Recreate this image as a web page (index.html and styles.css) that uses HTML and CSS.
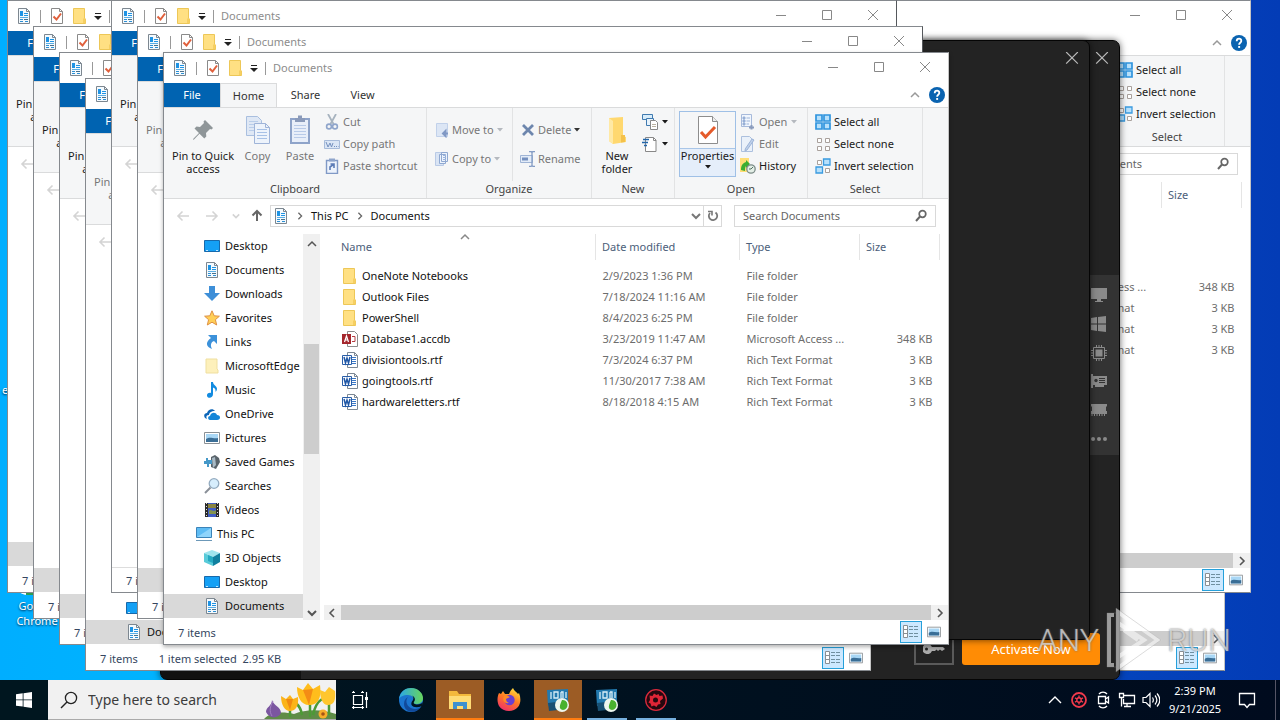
FILE: index.html
```html
<!DOCTYPE html>
<html lang="en">
<head>
<meta charset="utf-8">
<title>Desktop</title>
<link rel="stylesheet" href="styles.css">
</head>
<body>
<svg class="sprite" aria-hidden="true">
  <symbol id="doc" viewBox="0 0 16 16"><path d="M2.500.500h8l3 3v12h-11z" fill="#f4fafe" stroke="#7d8790"/><path d="M10.500.500v3h3" fill="none" stroke="#7d8790"/><path d="M4 3h3v5H4zM8 5h4v1H8zM8 7h4v1H8z" fill="#1e93e4"/><path d="M4 9h8v1H4z" fill="#5aaee4"/><path d="M4 11h3v1H4zM4 13h3v1H4zM9 13h3v1H9z" fill="#2c8fd4"/><path d="M8 11h4v1H8z" fill="#4a6f88"/></symbol>
  <symbol id="check" viewBox="0 0 16 16"><path d="M2.500.500h8l3 3v12h-11z" fill="#fff" stroke="#8a8a8a"/><path d="M10.500.500v3h3" fill="none" stroke="#8a8a8a"/><path d="M4.500 8.500l3 3 4.500-6" fill="none" stroke="#e0603c" stroke-width="2"/></symbol>
  <symbol id="folder" viewBox="0 0 16 16"><path d="M1.500.500h11v10l1 .5v4.500h-12z" fill="#ffe083" stroke="#edc757"/><path d="M11 15V10.500h2.500V15z" fill="#f6cf62"/></symbol>
  <symbol id="tri" viewBox="0 0 8 8"><path d="M1 2h6L4 5.500z" fill="currentColor"/></symbol>
  <symbol id="bartri" viewBox="0 0 8 8"><path d="M1 1h6v1H1zM0 4h8L4 8z" fill="#222"/></symbol>
  <symbol id="min" viewBox="0 0 12 12"><path d="M1 5.500h10" stroke="currentColor"/></symbol>
  <symbol id="max" viewBox="0 0 12 12"><path d="M1.500.500h9v9h-9z" fill="none" stroke="currentColor"/></symbol>
  <symbol id="close" viewBox="0 0 12 12"><path d="M1 0l10 10M11 0L1 10" stroke="currentColor"/></symbol>
  <symbol id="up" viewBox="0 0 10 10"><path d="M1 7l4-4 4 4" fill="none" stroke="currentColor" stroke-width="1.500"/></symbol>
  <symbol id="down" viewBox="0 0 10 10"><path d="M1 3l4 4 4-4" fill="none" stroke="currentColor" stroke-width="2"/></symbol>
  <symbol id="right" viewBox="0 0 10 10"><path d="M3 1l4 4-4 4" fill="none" stroke="currentColor" stroke-width="1.600"/></symbol>
  <symbol id="left" viewBox="0 0 10 10"><path d="M7 1L3 5l4 4" fill="none" stroke="currentColor" stroke-width="1.600"/></symbol>
  <symbol id="help" viewBox="0 0 16 16"><circle cx="8" cy="8" r="8" fill="#0a63b0"/><path d="M5.700 6.200C5.700 2.800 10.500 3 10.300 6c-.1 1.800-2.200 1.800-2.200 3.800" fill="none" stroke="#fff" stroke-width="1.800"/><path d="M7.200 11h1.900v1.900H7.200z" fill="#fff"/></symbol>
  <symbol id="back" viewBox="0 0 14 12"><path d="M13 6H2M6.500 1.500L2 6l4.500 4.500" fill="none" stroke="currentColor" stroke-width="1.600"/></symbol>
  <symbol id="fwd" viewBox="0 0 14 12"><path d="M1 6h11M7.500 1.500L12 6l-4.500 4.500" fill="none" stroke="currentColor" stroke-width="1.600"/></symbol>
  <symbol id="uparrow" viewBox="0 0 12 14"><path d="M6 12V2M1.500 6.500L6 2l4.500 4.500" fill="none" stroke="currentColor" stroke-width="2"/></symbol>
  <symbol id="refresh" viewBox="0 0 12 12"><path d="M8.500 2.500A4.200 4.200 0 1 1 3 3" fill="none" stroke="currentColor" stroke-width="1.800"/><path d="M1 1.500h4v4" fill="none" stroke="currentColor" stroke-width="1.600"/></symbol>
  <symbol id="mag" viewBox="0 0 14 14"><circle cx="8.500" cy="5" r="3.300" fill="none" stroke="currentColor" stroke-width="1.700"/><path d="M6 7.500L2 12" stroke="currentColor" stroke-width="2"/></symbol>
  <symbol id="pin" viewBox="0 0 22 24"><path d="M13 2l8 8-1.500 1.500-1.500-.5-4 4 .3 3.500-2 2-4.800-4.800L2 21.500 1 22l.5-1.500 5.500-5.500-4.500-4.500 2-2L8 9l4-4-.5-1.500z" fill="#8f9699"/></symbol>
  <symbol id="copy" viewBox="0 0 26 30"><path d="M1.500 1.500h11l4 4v15h-15z" fill="#dfe8f5" stroke="#a9bfdf"/><path d="M4 6.500h9M4 9.500h9M4 12.500h9M4 15.500h9" stroke="#b9cde9"/><path d="M9.500 8.500h11l4 4v16h-15z" fill="#edf3fb" stroke="#9fb4d8"/><path d="M20.500 8.500v4h4" fill="none" stroke="#9fb4d8"/><path d="M12 14.500h10M12 17.500h10M12 20.500h10M12 23.500h10" stroke="#a7c1e6"/></symbol>
  <symbol id="paste" viewBox="0 0 22 30"><path d="M2 4h18v24H2z" fill="#e8eef9" stroke="#8ea3c9" stroke-width="2"/><path d="M6 3h3V.500h4V3h3v4H6z" fill="#8a9aba"/><path d="M5 10.500h12M5 13.500h12M5 16.500h12M5 19.500h12M5 22.500h12" stroke="#b8cae8"/></symbol>
  <symbol id="cut" viewBox="0 0 16 16"><path d="M4 0l5.500 10M12 0L6.500 10" stroke="#a7b3bf" stroke-width="1.800"/><circle cx="5" cy="12.500" r="2.400" fill="none" stroke="#8fa5cb" stroke-width="1.600"/><circle cx="11" cy="12.500" r="2.400" fill="none" stroke="#8fa5cb" stroke-width="1.600"/></symbol>
  <symbol id="copypath" viewBox="0 0 16 16"><path d="M.500 4.500h15v8H.500z" fill="#dbe6f5" stroke="#a7bbd9"/><path d="M2 6l2 5 2-4 1.500 4L9 7M10 10.500h1M12 10.500h1M14 10.500h.5" fill="none" stroke="#7591bf"/></symbol>
  <symbol id="pastesc" viewBox="0 0 16 16"><path d="M2.500 2.500h11v13h-11z" fill="#edf3fc" stroke="#8099c6" stroke-width="1.400"/><path d="M5 .500h6v3H5z" fill="#8fa5cb"/><path d="M6 12V9l4-3M6.500 6H10v4" fill="none" stroke="#5c7cb6" stroke-width="1.600"/></symbol>
  <symbol id="moveto" viewBox="0 0 16 16"><path d="M2.500 1.500h11v13h-11z" fill="#dce6f5" stroke="#c1d1ea"/><path d="M14 11.500H9M11.500 9l-2.500 2.500 2.500 2.500z" fill="#8098c4" stroke="#8098c4" stroke-width="2"/></symbol>
  <symbol id="copyto" viewBox="0 0 16 16"><path d="M1.500 1.500h8v13h-8z" fill="#d9e4f4" stroke="#b9cae6"/><path d="M5.500 3.500h6v9h-6zM7.500 1.500h6v9h-6z" fill="#edf3fc" stroke="#8fa8d1"/><path d="M9 4.500h3M9 6.500h3M9 8.500h3" stroke="#9cb5dd"/></symbol>
  <symbol id="delete" viewBox="0 0 16 16"><path d="M3 3l10 10M13 3L3 13" stroke="#6d86ad" stroke-width="2.800"/></symbol>
  <symbol id="rename" viewBox="0 0 16 16"><path d="M.500 4.500h12v7H.500z" fill="#e3ecf8" stroke="#9fb4d5"/><path d="M2 6.500h6v3H2z" fill="#7590bf"/><path d="M9 .500h2l1 1 1-1h2M12 1.500v13M9 15.500h2l1-1 1 1h2" fill="none" stroke="#829bc4" stroke-width="1.300"/></symbol>
  <symbol id="bigfolder" viewBox="0 0 20 30"><path d="M2 3l14-1v19l3 1v5L6 29 2 26z" fill="#ffd86f"/><path d="M2 3l4 3v23l-4-3z" fill="#ffe9a5"/><path d="M14 20h4v7l-4 .5z" fill="#f4c14b"/></symbol>
  <symbol id="newitem" viewBox="0 0 16 16"><path d="M.500.500h10v5H.500z" fill="#d7ecfa" stroke="#407ab0"/><path d="M4.500 4.500h7v7h-7z" fill="#e8f3fc" stroke="#407ab0"/><path d="M8.500 6.500h5l2 2v7h-7z" fill="#fff" stroke="#888"/><path d="M10 10.500h4M10 12.500h4" stroke="#b9b1a1"/></symbol>
  <symbol id="easy" viewBox="0 0 16 16"><path d="M3.500 1.500h8l2.500 2.500v11.500H3.500z" fill="#fff" stroke="#888"/><path d="M1 3.500h6M0 6.500h6M2 9.500h3" stroke="#2467aa" stroke-width="1.300"/><path d="M11.500 1.500v3H14" fill="none" stroke="#888"/></symbol>
  <symbol id="bigcheck" viewBox="0 0 22 30"><path d="M1.500 1.500h14l5 5v22h-19z" fill="#fff" stroke="#8d8d8d"/><path d="M15.500 1.500v5h5" fill="#eee" stroke="#8d8d8d"/><path d="M4 17l4.500 5L18 12" fill="none" stroke="#e55b2b" stroke-width="3"/></symbol>
  <symbol id="open" viewBox="0 0 16 16"><path d="M1.500.500h10v12h-10z" fill="#f1f6fd" stroke="#a7badb"/><path d="M3 3h2v2H3zM3 6h2v2H3zM3 9h2v2H3zM6.500 4H10M6.500 7H10M6.500 10H9" fill="#86a1cc" stroke="#9db4d9"/><path d="M9 13.500h5M11.500 11v4.500" stroke="#8b9cbd" stroke-width="2"/></symbol>
  <symbol id="edit" viewBox="0 0 16 16"><path d="M1.500.500h8l3 3v12h-11z" fill="#eaf1fa" stroke="#acc0de"/><path d="M14 4L7 14l-2 1 .3-2.200L12 3z" fill="#bfd1eb" stroke="#9cb3d7"/></symbol>
  <symbol id="history" viewBox="0 0 16 16"><path d="M0 0h9v14H0z" fill="#ffde76"/><path d="M1 12c0-5 2-7 5-8v-2l4 4-4 4V8c-1 1-1 3-1 5z" fill="#3cae30"/><circle cx="11" cy="11" r="4.200" fill="#e3eee6" stroke="#7c8c88" stroke-width="1.300"/><path d="M13 9l-2 2H9" stroke="#507060" fill="none"/></symbol>
  <symbol id="selall" viewBox="0 0 16 16"><path d="M1 1h6v6H1zM9 1h6v6H9zM1 9h6v6H1zM9 9h6v6H9z" fill="#b7e0fb" stroke="#2f94de" stroke-width="1.700"/></symbol>
  <symbol id="selnone" viewBox="0 0 16 16"><path d="M2.500 2.500h4v4h-4zM10.500 2.500h4v4h-4zM2.500 10.500h4v4h-4zM10.500 10.500h4v4h-4z" fill="#fff" stroke="#a9a19c"/></symbol>
  <symbol id="selinv" viewBox="0 0 16 16"><path d="M2.500 2.500h4v4h-4zM10.500 10.500h4v4h-4z" fill="#fff" stroke="#a9a19c"/><path d="M8.500 1h6.500v6H8.500zM1 9h6.500v6H1z" fill="#b7e0fb" stroke="#3a9be0" stroke-width="1.300"/></symbol>
  <symbol id="desk" viewBox="0 0 16 16"><path d="M.500 2.500h15v11H.500z" fill="#14a0f5" stroke="#1769ab"/><path d="M2 12.500h2M12 12.500h2" stroke="#bfe6ff"/></symbol>
  <symbol id="downl" viewBox="0 0 16 16"><path d="M5 0h6v7h5l-8 8-8-8h5z" fill="#3e8fd8"/></symbol>
  <symbol id="star" viewBox="0 0 16 16"><path d="M8 .800l2.200 5 5.200.4-4 3.500 1.300 5.300L8 12.200 3.300 15l1.300-5.300-4-3.500 5.200-.4z" fill="#ffcf57" stroke="#df9144"/></symbol>
  <symbol id="link" viewBox="0 0 16 16"><path d="M4 1h9v9l-3-3c-3 1-4 4-2 8-6-2-7-7-1-11z" fill="#3c91da"/></symbol>
  <symbol id="folder2" viewBox="0 0 16 16"><path d="M2 1h11v10l1 1v3H2z" fill="#fdf0bb" stroke="#efdf9f"/></symbol>
  <symbol id="music" viewBox="0 0 16 16"><path d="M7 0h2c0 3 4 4 4 7 0 1-.5 2-1.500 3 .5-3-1-4-2.500-4.500V12c0 5-6.500 4.500-6 1 .3-2 2.500-2.500 4-2z" fill="#128be0"/></symbol>
  <symbol id="onedrive" viewBox="0 0 16 16"><path d="M1 12c-2-3 0-5 2-5 1-4 6-5 8-2-4 0-6 2-6 4-3 0-3 2-2 4z" fill="#0d66b8"/><path d="M6 14c-3-1-2-4 0-4 1-4 6-4 7-1 4 0 4 5 0 5z" fill="#1586d8"/></symbol>
  <symbol id="pics" viewBox="0 0 16 16"><path d="M.500 2.500h15v11H.500z" fill="#fff" stroke="#8a9095"/><path d="M2 4h12v8H2z" fill="#a9d7f5"/><path d="M2 9c4-3 7 0 12-1v4H2z" fill="#3a6e96"/></symbol>
  <symbol id="games" viewBox="0 0 16 16"><path d="M7 3l4-2 4 3 1 4-4 7-5-2z" fill="#59636a"/><path d="M8 4l3-1 1 8-3 3z" fill="#a9bac5"/><path d="M0 7h2V4h2v2h4v4H5v3H3v-3H0z" fill="#4598c8"/></symbol>
  <symbol id="search2" viewBox="0 0 16 16"><circle cx="10" cy="5.500" r="4.800" fill="#d7eefd" stroke="#93abc0" stroke-width="1.300"/><path d="M6.500 9.500L1 15" stroke="#8a8f98" stroke-width="2"/></symbol>
  <symbol id="videos" viewBox="0 0 16 16"><path d="M1 1h14v14H1z" fill="#2b2b2b"/><path d="M4 1h8v14H4z" fill="#415dc4"/><path d="M4 2h8v4H4z" fill="#8a8440"/><path d="M5 9c2-3 4 2 7-1v4H5z" fill="#83934f"/><path d="M2.500 1v14M13.500 1v14" stroke="#ddd" stroke-dasharray="1 2"/></symbol>
  <symbol id="pc" viewBox="0 0 16 16"><path d="M.500 1.500h15v10H.500z" fill="#5ebcf4" stroke="#3b83b8"/><path d="M1 11L15 2v9z" fill="#8fd4fb"/><path d="M0 14.500h16" stroke="#6c98b8"/></symbol>
  <symbol id="objects" viewBox="0 0 16 16"><path d="M0 3l8-3 8 3-7 4z" fill="#9fe5ee"/><path d="M0 3l9 4v9l-9-4z" fill="#59cbd9"/><path d="M16 3L9 7v9l7-4z" fill="#10809f"/><path d="M4 5l5 2v6l-5-2z" fill="#25a9c1"/></symbol>
  <symbol id="access" viewBox="0 0 16 16"><path d="M5.500.500h7l3 3v12h-10z" fill="#fff" stroke="#8c8c8c"/><path d="M0 3h9v10H0z" fill="#a4262c"/><path d="M2.500 11l2-6 2 6M3.200 9h2.600" fill="none" stroke="#fff" stroke-width="1.200"/><path d="M10 5.500h3v5h-3" fill="none" stroke="#b53c42"/></symbol>
  <symbol id="word" viewBox="0 0 16 16"><path d="M5.500.500h7l3 3v12h-10z" fill="#fff" stroke="#7c8894"/><path d="M12.500.500v3h3" fill="none" stroke="#7c8894"/><path d="M10 5.500h4M10 7.500h4M10 9.500h4M10 11.500h4" stroke="#3b78c6"/><path d="M.500 3.500h9v9h-9z" fill="#fff" stroke="#2a5ea8"/><path d="M2 5l1.500 6L5 6l1.500 5L8 5" fill="none" stroke="#2158a6" stroke-width="1.500"/></symbol>
  <symbol id="details" viewBox="0 0 16 14"><path d="M.500.500h4v12h-4zM.500 4.500h4M.500 8.500h4" fill="#fff" stroke="#8a8f94"/><path d="M6 1.500h4M11 1.500h4M6 4.500h4M11 4.500h4M6 8.500h4M11 8.500h4M6 11.500h4M11 11.500h4" stroke="#6f8fa0"/></symbol>
</svg>

<main class="desktop">
  <div class="shortcut shortcut-edge">e</div>
  <div class="shortcut shortcut-chrome"><i class="chrome-dot"></i>Google<br>Chrome</div>

  <section class="window at-1">
    <header class="titlebar"><svg class="i16"><use href="#doc"/></svg><i class="bar"></i><svg class="i16"><use href="#check"/></svg><svg class="i16 fold"><use href="#folder"/></svg><svg class="i8"><use href="#bartri"/></svg><i class="bar"></i></header>
    <nav class="tabs"><button class="tab file">File</button></nav>
    <div class="ribbon"><div class="group"><div class="tools"><button class="big pinbtn"><span class="bigicon"></span><span>Pin to Quick<br>access</span></button></div></div></div>
    <div class="address"><svg class="arrow faint"><use href="#back"/></svg></div>
    <div class="body"><div class="tree"><div class="node selected"></div></div></div>
    <footer class="status"><span>7 items</span></footer>
  </section>

  <section class="window at-2">
    <header class="titlebar"><svg class="i16"><use href="#doc"/></svg><i class="bar"></i><svg class="i16"><use href="#check"/></svg><svg class="i16 fold"><use href="#folder"/></svg></header>
    <nav class="tabs"><button class="tab file">File</button></nav>
    <div class="ribbon"><div class="group"><div class="tools"><button class="big pinbtn"><span class="bigicon"></span><span>Pin to Quick<br>access</span></button></div></div></div>
    <div class="address"><svg class="arrow faint"><use href="#back"/></svg></div>
    <div class="body"><div class="tree"><div class="node selected"></div></div></div>
    <footer class="status"><span>7 items</span></footer>
  </section>

  <section class="window at-3">
    <header class="titlebar"><svg class="i16"><use href="#doc"/></svg><i class="bar"></i><svg class="i16"><use href="#check"/></svg></header>
    <nav class="tabs"><button class="tab file">File</button></nav>
    <div class="ribbon"><div class="group"><div class="tools"><button class="big pinbtn"><span class="bigicon"></span><span>Pin to Quick<br>access</span></button></div></div></div>
    <div class="address"><svg class="arrow faint"><use href="#back"/></svg></div>
    <div class="body"><div class="tree"><div class="node selected"></div></div></div>
    <footer class="status"><span>7 items</span></footer>
  </section>

  <section class="window at-b">
    <div class="body"><div class="files"><div class="hscroll"><span class="track"></span><svg class="i10"><use href="#right"/></svg></div></div></div>
    <footer class="status"><div class="views"><button class="view on" aria-label="Details"><svg><use href="#details"/></svg></button><button class="view" aria-label="Thumbnails"><svg><use href="#pics"/></svg></button></div></footer>
  </section>

  <section class="window at-a">
    <header class="titlebar"><div class="controls"><button aria-label="Minimize"><svg class="i12"><use href="#min"/></svg></button><button aria-label="Maximize"><svg class="i12"><use href="#max"/></svg></button><button aria-label="Close"><svg class="i12"><use href="#close"/></svg></button></div></header>
    <nav class="tabs"><div class="tabend"><svg class="i10"><use href="#up"/></svg><svg class="i16"><use href="#help"/></svg></div></nav>
    <div class="ribbon end">
      <div class="group select"><div class="tools"><div class="stack">
        <button class="small"><svg class="i16"><use href="#selall"/></svg><span>Select all</span></button>
        <button class="small"><svg class="i16"><use href="#selnone"/></svg><span>Select none</span></button>
        <button class="small"><svg class="i16"><use href="#selinv"/></svg><span>Invert selection</span></button></div></div><div class="caption">Select</div></div>
    </div>
    <div class="address end"><label class="search"><input type="text" placeholder="Search Documents" aria-label="Search"><svg class="i14"><use href="#mag"/></svg></label></div>
    <div class="body"><div class="files">
      <table class="list right">
        <colgroup><col class="c-type"><col class="c-size"></colgroup>
        <thead><tr><th></th><th>Size</th></tr></thead>
        <tbody>
          <tr class="blank"><td></td><td></td></tr><tr class="blank"><td></td><td></td></tr><tr class="blank"><td></td><td></td></tr>
          <tr><td>Microsoft Access ...</td><td>348 KB</td></tr>
          <tr><td>Rich Text Format</td><td>3 KB</td></tr>
          <tr><td>Rich Text Format</td><td>3 KB</td></tr>
          <tr><td>Rich Text Format</td><td>3 KB</td></tr>
        </tbody>
      </table>
      <div class="hscroll"><span class="track"></span><svg class="i10"><use href="#right"/></svg></div></div></div>
    <footer class="status"><div class="views"><button class="view on" aria-label="Details"><svg><use href="#details"/></svg></button><button class="view" aria-label="Thumbnails"><svg><use href="#pics"/></svg></button></div></footer>
  </section>

  <section class="dark dark-back">
    <button class="dclose" aria-label="Close"><svg class="i14"><use href="#close"/></svg></button>
    <div class="specs">
      <svg viewBox="0 0 16 16"><path d="M0 1h16v11H10v2h2v1H4v-1h2v-2H0z"/></svg>
      <svg viewBox="0 0 16 16"><path d="M0 2l6-1v6.500H0zM7 1l8-1v7.500H7zM0 8.500h6V15l-6-1zM7 8.500h8V16l-8-1z"/></svg>
      <svg viewBox="0 0 16 16"><path d="M4.500 4.500h7v7h-7z"/><path d="M2.500 2.500h11v11h-11z" fill="none" stroke="#8a8a8a"/><path d="M5.500 0v2M8 0v2M10.500 0v2M5.500 14v2M8 14v2M10.500 14v2M0 5.500h2M0 8h2M0 10.500h2M14 5.500h2M14 8h2M14 10.500h2" stroke="#8a8a8a"/></svg>
      <svg viewBox="0 0 16 16"><path d="M0 1h2v2h14v9h-3v2H4v-2H2v3H0z"/><path d="M8 5.500h6M8 7.500h6M8 9.500h6" stroke="#333"/><circle cx="5" cy="7.500" r="1.700" fill="#333"/></svg>
      <svg viewBox="0 0 16 16"><path d="M0 2h16v2l-1 1v4h1v3H0V9h1V5L0 4z"/><path d="M1 12v2M3.500 12v2M6 12v2M8.500 12v2M11 12v2M13.500 12v2" stroke="#8a8a8a"/></svg>
      <svg viewBox="0 0 16 16"><circle cx="2" cy="8" r="2"/><circle cx="8" cy="8" r="2"/><circle cx="14" cy="8" r="2"/></svg>
    </div>
    <div class="dfoot">
      <button class="key" aria-label="Enter key"><svg viewBox="0 0 22 10"><path d="M5 0a5 5 0 1 0 4 7h3l1.500-1.500L15 7l2-1.500L19 7l3-2-2-2H9A5 5 0 0 0 5 0zM3.500 3.500a1.500 1.500 0 1 1 0 3 1.500 1.500 0 0 1 0-3z" fill="#aaa" fill-rule="evenodd"/></svg></button>
      <button class="activate">Activate Now</button>
    </div>
  </section>
  <section class="dark dark-front"><button class="dclose" aria-label="Close"><svg class="i14"><use href="#close"/></svg></button></section>

  <section class="window inactive at-4">
    <header class="titlebar"><svg class="i16"><use href="#doc"/></svg></header>
    <nav class="tabs"><button class="tab file">File</button></nav>
    <div class="ribbon"><div class="group"><div class="tools"><button class="big pinbtn"><span class="bigicon"></span><span>Pin to Quick<br>access</span></button></div></div></div>
    <div class="address"><svg class="arrow faint"><use href="#back"/></svg></div>
    <div class="body"><div class="tree"><div class="node"><svg class="i16"><use href="#desk"/></svg></div><div class="node selected"><svg class="i16"><use href="#doc"/></svg><span>Documents</span></div></div></div>
    <footer class="status"><span>7 items</span><span>1 item selected&nbsp; 2.95 KB</span><div class="views"><button class="view on" aria-label="Details"><svg><use href="#details"/></svg></button><button class="view" aria-label="Thumbnails"><svg><use href="#pics"/></svg></button></div></footer>
  </section>

  <section class="window at-5">
    <header class="titlebar"><svg class="i16"><use href="#doc"/></svg><i class="bar"></i><svg class="i16"><use href="#check"/></svg><svg class="i16 fold"><use href="#folder"/></svg><svg class="i8"><use href="#bartri"/></svg><i class="bar"></i><span class="title">Documents</span><div class="controls"><button aria-label="Minimize"><svg class="i12"><use href="#min"/></svg></button><button aria-label="Maximize"><svg class="i12"><use href="#max"/></svg></button><button aria-label="Close"><svg class="i12"><use href="#close"/></svg></button></div></header>
    <nav class="tabs"><button class="tab file">File</button></nav>
    <div class="ribbon"><div class="group"><div class="tools"><button class="big pinbtn"><span class="bigicon"></span><span>Pin to Quick<br>access</span></button></div></div></div>
    <div class="address"><svg class="arrow faint"><use href="#back"/></svg></div>
    <div class="body ruled"></div>
    <footer class="status"><span>7 items</span></footer>
  </section>

  <section class="window inactive at-6">
    <header class="titlebar"><svg class="i16"><use href="#doc"/></svg><i class="bar"></i><svg class="i16"><use href="#check"/></svg><svg class="i16 fold"><use href="#folder"/></svg><svg class="i8"><use href="#bartri"/></svg><i class="bar"></i><span class="title">Documents</span><div class="controls"><button aria-label="Minimize"><svg class="i12"><use href="#min"/></svg></button><button aria-label="Maximize"><svg class="i12"><use href="#max"/></svg></button><button aria-label="Close"><svg class="i12"><use href="#close"/></svg></button></div></header>
    <nav class="tabs"><button class="tab file">File</button></nav>
    <div class="ribbon"><div class="group"><div class="tools"><button class="big pinbtn"><span class="bigicon"></span><span>Pin to Quick<br>access</span></button></div></div></div>
    <div class="address"><svg class="arrow faint"><use href="#back"/></svg></div>
    <div class="body"><div class="tree"><div class="node selected"></div></div></div>
    <footer class="status"><span>7 items</span></footer>
  </section>

  <section class="window at-7">
    <header class="titlebar"><svg class="i16"><use href="#doc"/></svg><i class="bar"></i><svg class="i16"><use href="#check"/></svg><svg class="i16 fold"><use href="#folder"/></svg><svg class="i8"><use href="#bartri"/></svg><i class="bar"></i><span class="title">Documents</span><div class="controls"><button aria-label="Minimize"><svg class="i12"><use href="#min"/></svg></button><button aria-label="Maximize"><svg class="i12"><use href="#max"/></svg></button><button aria-label="Close"><svg class="i12"><use href="#close"/></svg></button></div></header>
    <nav class="tabs"><button class="tab file">File</button><button class="tab home">Home</button><button class="tab">Share</button><button class="tab">View</button><div class="tabend"><svg class="i10"><use href="#up"/></svg><svg class="i16"><use href="#help"/></svg></div></nav>
    <div class="ribbon">
      <div class="group clipboard"><div class="tools">
        <button class="big pinbtn"><span class="bigicon"><svg width="22" height="24"><use href="#pin"/></svg></span><span>Pin to Quick<br>access</span></button>
        <button class="big copybtn off"><span class="bigicon"><svg width="26" height="30"><use href="#copy"/></svg></span>Copy</button>
        <button class="big pastebtn off"><span class="bigicon"><svg width="22" height="30"><use href="#paste"/></svg></span>Paste</button>
        <div class="stack">
          <button class="small off"><svg class="i16"><use href="#cut"/></svg><span>Cut</span></button>
          <button class="small off"><svg class="i16"><use href="#copypath"/></svg><span>Copy path</span></button>
          <button class="small off"><svg class="i16"><use href="#pastesc"/></svg><span>Paste shortcut</span></button>
        </div></div><div class="caption">Clipboard</div></div>
      <div class="group organize"><div class="tools">
        <div class="stack two ruled-right">
          <button class="small off"><svg class="i16"><use href="#moveto"/></svg>Move to<svg class="i8 dim"><use href="#tri"/></svg></button>
          <button class="small off"><svg class="i16"><use href="#copyto"/></svg>Copy to<svg class="i8 dim"><use href="#tri"/></svg></button>
        </div>
        <div class="stack two">
          <button class="small off"><svg class="i16"><use href="#delete"/></svg>Delete<svg class="i8 ink"><use href="#tri"/></svg></button>
          <button class="small off"><svg class="i16"><use href="#rename"/></svg>Rename</button>
        </div></div><div class="caption">Organize</div></div>
      <div class="group new"><div class="tools">
        <button class="big newbtn"><span class="bigicon"><svg width="20" height="30"><use href="#bigfolder"/></svg></span><span>New<br>folder</span></button>
        <div class="stack">
          <button class="small" aria-label="New item"><svg class="i16"><use href="#newitem"/></svg><svg class="i8"><use href="#tri"/></svg></button>
          <button class="small" aria-label="Easy access"><svg class="i16"><use href="#easy"/></svg><svg class="i8"><use href="#tri"/></svg></button>
        </div></div><div class="caption">New</div></div>
      <div class="group open"><div class="tools">
        <button class="big props"><span class="bigicon"><svg width="22" height="30"><use href="#bigcheck"/></svg></span><span class="plabel">Properties<svg class="i8"><use href="#tri"/></svg></span></button>
        <div class="stack">
          <button class="small off"><svg class="i16"><use href="#open"/></svg><span>Open</span><svg class="i8 dim"><use href="#tri"/></svg></button>
          <button class="small off"><svg class="i16"><use href="#edit"/></svg><span>Edit</span></button>
          <button class="small"><svg class="i16"><use href="#history"/></svg><span>History</span></button>
        </div></div><div class="caption">Open</div></div>
      <div class="group select"><div class="tools"><div class="stack">
        <button class="small"><svg class="i16"><use href="#selall"/></svg><span>Select all</span></button>
        <button class="small"><svg class="i16"><use href="#selnone"/></svg><span>Select none</span></button>
        <button class="small"><svg class="i16"><use href="#selinv"/></svg><span>Invert selection</span></button></div></div><div class="caption">Select</div></div>
    </div>
    <div class="address">
      <svg class="arrow faint"><use href="#back"/></svg><svg class="arrow faint"><use href="#fwd"/></svg><svg class="i8 faint"><use href="#down"/></svg><svg class="uparrow"><use href="#uparrow"/></svg>
      <div class="path"><svg class="i16"><use href="#doc"/></svg><svg class="i8"><use href="#right"/></svg><a href="#">This PC</a><svg class="i8"><use href="#right"/></svg><a href="#">Documents</a><svg class="i10 push"><use href="#down"/></svg><span class="refresh"><svg class="i12"><use href="#refresh"/></svg></span></div>
      <label class="search"><input type="text" placeholder="Search Documents" aria-label="Search"><svg class="i14"><use href="#mag"/></svg></label>
    </div>
    <div class="body">
      <div class="tree">
        <div class="node"><svg class="i16"><use href="#desk"/></svg><span>Desktop</span></div>
        <div class="node"><svg class="i16"><use href="#doc"/></svg><span>Documents</span></div>
        <div class="node"><svg class="i16"><use href="#downl"/></svg><span>Downloads</span></div>
        <div class="node"><svg class="i16"><use href="#star"/></svg><span>Favorites</span></div>
        <div class="node"><svg class="i16"><use href="#link"/></svg><span>Links</span></div>
        <div class="node"><svg class="i16"><use href="#folder2"/></svg><span>MicrosoftEdge</span></div>
        <div class="node"><svg class="i16"><use href="#music"/></svg><span>Music</span></div>
        <div class="node"><svg class="i16"><use href="#onedrive"/></svg><span>OneDrive</span></div>
        <div class="node"><svg class="i16"><use href="#pics"/></svg><span>Pictures</span></div>
        <div class="node"><svg class="i16"><use href="#games"/></svg><span>Saved Games</span></div>
        <div class="node"><svg class="i16"><use href="#search2"/></svg><span>Searches</span></div>
        <div class="node"><svg class="i16"><use href="#videos"/></svg><span>Videos</span></div>
        <div class="node root"><svg class="i16"><use href="#pc"/></svg><span>This PC</span></div>
        <div class="node"><svg class="i16"><use href="#objects"/></svg><span>3D Objects</span></div>
        <div class="node"><svg class="i16"><use href="#desk"/></svg><span>Desktop</span></div>
        <div class="node selected"><svg class="i16"><use href="#doc"/></svg><span>Documents</span></div>
      </div>
      <div class="vscroll"><svg class="i10"><use href="#up"/></svg><span class="gap"></span><span class="thumb"></span><span class="gap after"></span><svg class="i10"><use href="#down"/></svg></div>
      <div class="files">
        <table class="list">
          <colgroup><col class="c-name"><col class="c-date"><col class="c-type"><col class="c-size"></colgroup>
          <thead><tr><th><svg class="sort"><use href="#up"/></svg>Name</th><th>Date modified</th><th>Type</th><th>Size</th></tr></thead>
          <tbody>
            <tr><td><svg class="i16"><use href="#folder"/></svg>OneNote Notebooks</td><td>2/9/2023 1:36 PM</td><td>File folder</td><td></td></tr>
            <tr><td><svg class="i16"><use href="#folder"/></svg>Outlook Files</td><td>7/18/2024 11:16 AM</td><td>File folder</td><td></td></tr>
            <tr><td><svg class="i16"><use href="#folder"/></svg>PowerShell</td><td>8/4/2023 6:25 PM</td><td>File folder</td><td></td></tr>
            <tr><td><svg class="i16"><use href="#access"/></svg>Database1.accdb</td><td>3/23/2019 11:47 AM</td><td>Microsoft Access ...</td><td>348 KB</td></tr>
            <tr><td><svg class="i16"><use href="#word"/></svg>divisiontools.rtf</td><td>7/3/2024 6:37 PM</td><td>Rich Text Format</td><td>3 KB</td></tr>
            <tr><td><svg class="i16"><use href="#word"/></svg>goingtools.rtf</td><td>11/30/2017 7:38 AM</td><td>Rich Text Format</td><td>3 KB</td></tr>
            <tr><td><svg class="i16"><use href="#word"/></svg>hardwareletters.rtf</td><td>8/18/2018 4:15 AM</td><td>Rich Text Format</td><td>3 KB</td></tr>
          </tbody>
        </table>
        <div class="hscroll"><svg class="i10"><use href="#left"/></svg><span class="track"></span><svg class="i10"><use href="#right"/></svg></div>
      </div>
    </div>
    <footer class="status"><span>7 items</span><div class="views"><button class="view on" aria-label="Details"><svg><use href="#details"/></svg></button><button class="view" aria-label="Thumbnails"><svg><use href="#pics"/></svg></button></div></footer>
  </section>

  <div class="watermark"><span>ANY</span><svg viewBox="0 0 58 66" width="58" height="66"><path d="M10 8H5v50h5M14 5l40 28-40 28zM14 16l26 17-26 17M20 23l14 10" fill="none" stroke="#fff" stroke-opacity=".55" stroke-width="4"/><path d="M12 6H3v54h9M12 1l45 32-45 32z" fill="none" stroke="#888" stroke-opacity=".3"/></svg><span>RUN</span></div>
</main>

<footer class="taskbar">
  <button class="start" aria-label="Start"><svg viewBox="0 0 16 16" width="16" height="16"><path d="M0 2.300L6.700 1.300V7.500H0zM7.500 1.200L16 0v7.500H7.500zM0 8.300h6.700v6.300L0 13.700zM7.500 8.300H16V16l-8.500-1.200z" fill="#fff"/></svg></button>
  <label class="tasksearch"><svg width="18" height="18" viewBox="0 0 18 18"><circle cx="11" cy="7" r="5.600" fill="none" stroke="#222" stroke-width="1.300"/><path d="M7 11L1 17" stroke="#222" stroke-width="1.400"/></svg><input type="text" placeholder="Type here to search" aria-label="Type here to search">
    <svg class="flowers" width="72" height="38" viewBox="0 0 72 38"><path d="M0 38c8-8 20-7 30-5 14-6 30-4 42 0v5z" fill="#5f8c47"/><path d="M26 36V20M46 36V12M49 34c2-10 6-14 9-16M38 34c-1-8-4-10-7-13M65 34V20" stroke="#4c9a35" stroke-width="2.500" fill="none"/><path d="M2 31c0-5 6-6 6-12 2 6 9 7 9 13-3 6-12 6-15-1z" fill="#7b56a0"/><path d="M9 20c-3 6-4 10-1 15" stroke="#a07fc0" fill="none"/><path d="M17 15l5 3 4-4 3 4 5-2c1 10-3 14-8 14s-9-6-9-15z" fill="#fbb41a"/><path d="M22 18l4 11 3-11" fill="#f08a12"/><path d="M33 6l6 3 5-7 5 6 7-4c2 15-3 20-11 20S33 16 33 6z" fill="#ffbd1c"/><path d="M39 9l6 15 4-16" fill="#f48c15"/><path d="M56 9l5 2 4-5 6 4c1 9-1 14-7 14s-8-8-8-15z" fill="#ffc62e"/><circle cx="59" cy="33" r="4.500" fill="#f6ad2a"/><circle cx="59" cy="33" r="1.800" fill="#a65416"/></svg></label>
  <div class="apps">
    <button class="app" aria-label="Task view"><svg width="18" height="18" viewBox="0 0 18 18"><path d="M2.500 4.500h9v9h-9zM1 1.500h3M10 1.500h3M2.500 0v2M11.500 0v2M1 16.500h12M2.500 15v3M11.500 15v3M15.500 1v16" fill="none" stroke="#fff" stroke-width="1.200"/><path d="M14 6h3v3h-3z" fill="#fff"/></svg></button>
    <button class="app" aria-label="Edge"><svg width="24" height="24" viewBox="0 0 24 24"><defs><linearGradient id="eg" x1="0" x2="1"><stop offset="0" stop-color="#2aa7e8"/><stop offset="1" stop-color="#68d65c"/></linearGradient></defs><circle cx="12" cy="12" r="12" fill="#1b75cf"/><path d="M0 11C1 3 7 0 12 0c7 0 12 5 12 10 0 4-3 6-7 6-3 0-4-1-3-2 3-4-1-7-5-7-5 0-8 2-9 4z" fill="url(#eg)"/><path d="M9 9c-4 5 0 12 7 12 3 0 5-1 6-3-4 9-17 7-17-2 0-4 2-6 4-7z" fill="#114a9a"/><path d="M14 12c1-2 0-4-1-4.500 4 2 3 5 2 6.500s1 2.500 3 2.500c3 0 5-1 6-2.500l-1 4c-7 3-14 0-9-6z" fill="#001520"/></svg></button>
    <button class="app hot" aria-label="File Explorer"><svg width="24" height="20" viewBox="0 0 24 20"><path d="M1 1h8l2 3h12v15H1z" fill="#f4b93c"/><path d="M1 6h22v13H1z" fill="#ffdc76"/><path d="M5 19v-7h14v7h-4v-3H9v3z" fill="#3f90cf"/></svg></button>
    <button class="app" aria-label="Firefox"><svg width="24" height="24" viewBox="0 0 24 24"><defs><linearGradient id="ff" x1=".8" y1="0" x2=".3" y2="1"><stop offset="0" stop-color="#ffe23f"/><stop offset=".5" stop-color="#ff7a22"/><stop offset="1" stop-color="#f0306a"/></linearGradient></defs><path d="M2 5l2 1 2-3 2 3h4c1-3 3-5 4-6 1 3 4 4 5 6l1-1c2 5 2 10-1 14-5 6-15 5-19-1C0 14 0 9 2 5z" fill="url(#ff)"/><circle cx="12.500" cy="12" r="5.200" fill="#6a3fd0"/><path d="M7 8c3-1 4 0 6 1-1 1-3 1-4 2 0 2 1 3 3 4-5 1-7-3-5-7z" fill="#ff8a25"/></svg></button>
    <button class="app hot" aria-label="Installer"><svg width="24" height="24" viewBox="0 0 24 24"><path d="M1 2l21-1v14l-20 3z" fill="#2279ae"/><path d="M5 4v7M8 4h4v6H8zM15 4v6M15 4h2v6M20 4v6" fill="none" stroke="#d8eef8" stroke-width="1.300"/><path d="M2 15l8-1 2 8-9 1z" fill="#184f72"/><circle cx="16" cy="17" r="7" fill="#eef6ee"/><path d="M16 12a5 5 0 0 1 1 10c-5-1-3-5-1-10z" fill="#49b12e"/></svg></button>
    <button class="app live" aria-label="Installer"><svg width="24" height="24" viewBox="0 0 24 24"><path d="M1 2l21-1v14l-20 3z" fill="#2279ae"/><path d="M5 4v7M8 4h4v6H8zM15 4v6M15 4h2v6M20 4v6" fill="none" stroke="#d8eef8" stroke-width="1.300"/><path d="M2 15l8-1 2 8-9 1z" fill="#184f72"/><circle cx="16" cy="17" r="7" fill="#eef6ee"/><path d="M16 12a5 5 0 0 1 1 10c-5-1-3-5-1-10z" fill="#49b12e"/></svg></button>
    <button class="app live" aria-label="Driver tool"><svg width="24" height="24" viewBox="0 0 24 24"><circle cx="12" cy="12" r="10.300" fill="#26080f" stroke="#d92a3c" stroke-width="1.300"/><path d="M5.500 7.500l3 .5 1.500-2.500 2.500 1.500 2-1 1 2 3-.5.500 3-3 2.500.5 3-2.500.5-1.500 2.500-2.500-1.500-2.500 1-1-3-2-1 1.500-2.500z" fill="#df2536"/><circle cx="11.500" cy="12" r="2.500" fill="#26080f"/></svg></button>
  </div>
  <div class="tray">
    <svg viewBox="0 0 18 18"><path d="M3 12l6-6 6 6" fill="none" stroke="#fff" stroke-width="1.400"/></svg>
    <svg viewBox="0 0 18 18"><circle cx="9" cy="9" r="7" fill="none" stroke="#f03a4c" stroke-width="1.800"/><circle cx="9" cy="9" r="2.200" fill="none" stroke="#f03a4c" stroke-width="1.400"/><path d="M9 4.500v2.500M9 11v2.500M5 6.800l2 1.200M11 10l2 1.200M13 6.800L11 8M7 10l-2 1.200" stroke="#f03a4c" stroke-width="1.400"/></svg>
    <svg viewBox="0 0 18 18"><path d="M4.500 5.500h7v7h-7zM11.500 8l3-2v6l-3-2M5 3c2-2.500 6-2.500 8 0M5 15c2 2.500 6 2.500 8 0" fill="none" stroke="#fff" stroke-width="1.300"/></svg>
    <svg viewBox="0 0 18 18"><path d="M6 4.500h10.500v8H5.500V8M9 12.500v3M6 15.500h7M1.500 2.500h4v4h-4zM3.500 6.500v9" fill="none" stroke="#fff" stroke-width="1.300"/></svg>
    <svg viewBox="0 0 18 18"><path d="M1 6.500h3l4-4v13l-4-4H1zM10.500 6.500c1 1.500 1 3.500 0 5M13 4.500c2.500 3 2.500 6 0 9M15 2.500c3.500 4 3.500 9 0 13" fill="none" stroke="#fff" stroke-width="1.200"/></svg>
    <time class="clock">2:39 PM<br>9/21/2025</time>
    <svg class="note" viewBox="0 0 18 18"><path d="M1.500 2.500h15v11h-5L9 16.500 6.500 13.500h-5z" fill="none" stroke="#fff" stroke-width="1.300"/></svg>
    <i class="peek"></i>
  </div>
</footer>
</body>
</html>
```
FILE: styles.css
```css
* { box-sizing: border-box; }
body {
  margin: 0;
  min-height: 100vh;
  display: flex;
  flex-direction: column;
  font: 11px/13px "Noto Sans", "Open Sans", sans-serif;
  color: #1a1a1a;
  overflow: hidden;
}
button { border: 0; padding: 0; background: none; font: inherit; color: inherit; }
input { border: 0; padding: 0; background: none; font: inherit; min-width: 0; outline: 0; }
a { color: inherit; text-decoration: none; }
svg { display: block; flex: none; }
.sprite { width: 0; height: 0; position: absolute; }
.i16 { width: 16px; height: 16px; }
.i14 { width: 14px; height: 14px; }
.i12 { width: 12px; height: 12px; }
.i10 { width: 10px; height: 10px; }
.i8 { width: 8px; height: 8px; }
.faint { color: #d4d4d4; }
.dim { color: #b5b9bf; }
.ink { color: #333; }

.desktop {
  flex: 1;
  position: relative;
  overflow: hidden;
  background: linear-gradient(90deg, #00aeff 0, #00b4ff 14%, #0548c0 80%, #033cb6 100%);
}
.shortcut { position: absolute; color: #fff; text-align: center; line-height: 15px; text-shadow: 0 1px 2px #024; }
.shortcut-edge { left: 2px; top: 382px; }
.shortcut-chrome { left: 12px; top: 578px; width: 50px; padding-top: 20px; }
.chrome-dot { position: absolute; left: 0; top: 0; width: 40px; height: 17px; border-radius: 0 0 16px 16px; background: linear-gradient(90deg, #fff 35%, #2c9c50 35%); }

/* Explorer windows */
.window {
  position: absolute;
  width: 786px;
  min-height: 593px;
  display: flex;
  flex-direction: column;
  background: #fff;
  border: 1px solid #85898e;
  border-right-color: #c4c4c4;
}
.at-1 { left: 7px; top: 0; }
.at-2 { left: 33px; top: 26px; }
.at-3 { left: 59px; top: 52px; }
.at-4 { left: 85px; top: 78px; }
.at-5 { left: 111px; top: 0; }
.at-6 { left: 137px; top: 26px; }
.at-7 { left: 163px; top: 52px; box-shadow: 0 2px 4px rgba(0, 0, 0, .3); }
.at-a { left: 465px; top: 0; }
.at-b { left: 439px; top: 78px; }
.at-5, .at-6 { border-right-color: #55585c; }

.titlebar { height: 30px; display: flex; align-items: center; padding-left: 8px; }
.bar { width: 1px; height: 13px; background: #999; margin: 0 8px; }
.titlebar .fold { margin-left: 7px; margin-right: 6px; }
.titlebar .i8 + .bar { margin-left: 7px; margin-right: 7px; }
.title { color: #8c8c8c; padding-bottom: 2px; }
.controls { margin-left: auto; display: flex; color: #888; }
.controls button { width: 46px; height: 30px; display: grid; place-items: center; }

.tabs { height: 24px; display: flex; align-items: stretch; }
.tab { width: 56px; text-align: center; color: #333; padding-bottom: 1px; }
.tab + .tab { width: 57px; }
.file { background: #0063b1; color: #fff; }
.home { background: #f5f6f7; border: 1px solid #dadbdc; border-bottom: 0; }
.tabend { margin-left: auto; display: flex; align-items: center; gap: 9px; padding: 0 3px 1px 0; color: #999; }

.ribbon { display: flex; height: 92px; background: #f5f6f7; border-top: 1px solid #dadbdc; border-bottom: 1px solid #dadbdc; }
.ribbon.end { justify-content: flex-end; padding-right: 25px; }
.group { display: flex; flex-direction: column; border-right: 1px solid #e2e3e4; }
.tools { height: 73px; display: flex; }
.caption { text-align: center; line-height: 16px; color: #444; }
.clipboard { width: 263px; }
.organize { width: 165px; }
.new { width: 83px; }
.open { width: 133px; }
.open .tools { padding-left: 4px; }
.select { width: 115px; }
.select .stack { padding-left: 7px; }
.big { display: flex; flex-direction: column; align-items: center; padding-top: 7px; line-height: 13px; }
.bigicon { height: 34px; display: flex; flex-direction: column; align-items: center; }
.bigicon svg[height="24"] { margin-top: 3px; }
.pinbtn { width: 70px; margin-left: 4px; white-space: nowrap; }
.copybtn { width: 39px; }
.pastebtn { width: 46px; margin-right: 1px; }
.newbtn { width: 50px; }
.off { color: #777; }
.inactive .big { color: #777; }
.stack { display: flex; flex-direction: column; padding-top: 3px; }
.small { height: 22px; display: flex; align-items: center; gap: 3px; white-space: nowrap; }
.small span { padding-bottom: 1px; }
.stack.two { padding-top: 7px; padding-left: 7px; }
.stack.two .small { height: 29px; gap: 2px; }
.ruled-right { width: 86px; border-right: 1px solid #e2e3e4; }
.props { width: 57px; height: 66px; margin: 3px 4px 0 0; padding-top: 3px; border: 1px solid #9fc0e6; }
.plabel { width: 55px; height: 28px; border-top: 1px solid #a9c6e8; background: #e5eefa; display: flex; flex-direction: column; align-items: center; gap: 1px; }

.address { height: 35px; display: flex; align-items: center; padding: 0 12px 1px; }
.address.end { justify-content: flex-end; }
.arrow { width: 14px; height: 12px; margin-right: 15px; }
.address .arrow + .i8 { margin-left: -2px; }
.uparrow { width: 12px; height: 14px; margin: 0 7px 0 11px; color: #666; }
.path { flex: 1; height: 22px; border: 1px solid #d9d9d9; display: flex; align-items: center; gap: 9px; padding-left: 2px; color: #111; margin-right: 12px; }
.path .i8 { color: #666; margin: 0 -2px; }
.path a { padding-bottom: 1px; }
.push { margin-left: auto; color: #777; }
.refresh { width: 18px; height: 20px; margin-left: -7px; display: grid; place-items: center; border-left: 1px solid #d9d9d9; color: #777; }
.search { width: 202px; height: 22px; border: 1px solid #d9d9d9; display: flex; align-items: center; padding: 0 7px 0 8px; color: #666; }
.search input { flex: 1; color: #666; padding-bottom: 1px; }
.search input::placeholder, .tasksearch input::placeholder { color: inherit; opacity: 1; }

.body { flex: 1; display: flex; min-height: 0; }
.ruled { border-bottom: 1px solid #ddd; }
.tree { width: 139px; display: flex; flex-direction: column; justify-content: flex-end; padding-bottom: 2px; color: #111; overflow: hidden; }
.node { height: 24px; display: flex; align-items: center; gap: 5px; padding-left: 40px; white-space: nowrap; }
.node span { padding-bottom: 2px; }
.root { padding-left: 32px; }
.selected { background: #d9d9d9; }
.vscroll { width: 17px; background: #f0f0f0; display: flex; flex-direction: column; align-items: center; padding: 5px 0 2px; color: #555; }
.thumb { width: 15px; height: 110px; background: #cdcdcd; }
.gap { flex: 95; }
.gap.after { flex: 153; }
.files { flex: 1; display: flex; flex-direction: column; padding-left: 4px; min-width: 0; }
.list { width: 616px; table-layout: fixed; border-collapse: collapse; color: #6d6d6d; }
.list.right { width: 200px; align-self: flex-end; margin-right: 8px; }
.c-date { width: 144px; }
.c-type { width: 120px; }
.c-size { width: 80px; }
.list th { height: 26px; padding: 0 6px 2px; text-align: left; font-weight: 400; color: #4c607a; border-right: 1px solid #e5e5e5; position: relative; }
.list th:first-child:not(:empty) { padding-left: 17px; }
.sort { position: absolute; left: 136px; top: -2px; width: 10px; height: 10px; color: #888; }
.list tbody::before { content: ""; display: block; height: 5px; }
.list td { height: 21px; padding: 0 7px; line-height: 16px; white-space: nowrap; }
.list td .i16 { display: inline-block; vertical-align: top; margin-right: 4px; }
.at-7 .list td:first-child { color: #111; padding-left: 18px; }
.list td:last-child { text-align: right; }
.hscroll { height: 15px; margin-top: auto; display: flex; align-items: center; background: #f0f0f0; color: #555; gap: 4px; padding: 0 3px; }
.hscroll .track { flex: 1; height: 15px; background: #cdcdcd; }

.status { height: 24px; display: flex; align-items: center; gap: 21px; padding-left: 14px; color: #354660; }
.views { margin-left: auto; display: flex; align-items: center; gap: 2px; padding-right: 4px; }
.view { width: 20px; height: 22px; display: grid; place-items: center; }
.view svg { width: 14px; height: 14px; }
.view.on { width: 22px; background: #cce8ff; border: 1px solid #26a0da; }
.view.on svg { width: 16px; height: 14px; }

/* Dark installer windows */
.dark { position: absolute; background: #232323; border: 1px solid #050505; border-radius: 7px; box-shadow: 0 0 7px rgba(0, 0, 0, .6); }
.dark-back { left: 160px; top: 40px; width: 960px; height: 640px; background: linear-gradient(90deg, #111 140px, #232323 140px); display: flex; flex-direction: column; align-items: flex-end; }
.dark-front { left: 130px; top: 40px; width: 960px; height: 600px; }
.dclose { position: absolute; right: 10px; top: 11px; color: #bbb; }
.specs { width: 40px; height: 180px; margin-top: 234px; padding: 12px 12px 8px 0; background: #333; display: flex; flex-direction: column; align-items: flex-end; justify-content: space-between; }
.specs svg { width: 16px; height: 16px; fill: #8a8a8a; }
.dfoot { margin-top: auto; padding: 0 19px 14px 0; display: flex; gap: 8px; }
.key { width: 40px; height: 32px; border: 2px solid #5a5a5a; display: grid; place-items: center; }
.key svg { width: 22px; height: 10px; }
.activate { width: 138px; height: 32px; border-radius: 3px; background: #ff8c05; color: #fff; font-size: 13px; }

.watermark { position: absolute; right: 49px; bottom: 7px; display: flex; align-items: center; gap: 5px; color: rgba(255, 255, 255, .6); font: 300 32px/40px Roboto, sans-serif; text-shadow: 0 0 2px #666; }

/* Taskbar */
.taskbar { height: 40px; display: flex; background: linear-gradient(90deg, #001620, #00101f 60%, #000b1e); color: #fff; }
.start { width: 48px; background: #00161f; display: grid; place-items: center; }
.tasksearch { width: 288px; background: #f1f1f1; border-bottom: 1px solid #aaa; color: #3c3c3c; display: flex; align-items: center; padding-left: 12px; gap: 10px; }
.tasksearch input { flex: 1; color: #3c3c3c; font-size: 14px; }
.flowers { margin-left: -10px; }
.apps { display: flex; gap: 1px; }
.app { width: 48px; display: grid; place-items: center; }
.app:first-child { margin-right: 2px; }
.app.hot { background: #9c5c25; border-bottom: 2px solid #ff7c10; border-top: 2px solid #9c5c25; }
.app.live { background: linear-gradient(#76b0df, #76b0df) center bottom / 40px 2px no-repeat; }
.tray { margin-left: auto; display: flex; align-items: center; gap: 6px; }
.tray svg { width: 18px; height: 18px; }
.clock { width: 58px; text-align: center; line-height: 18px; }
.tray .note { margin: 0 13px 0 8px; }
.peek { width: 1px; height: 40px; background: #556; margin-right: 4px; }
```
